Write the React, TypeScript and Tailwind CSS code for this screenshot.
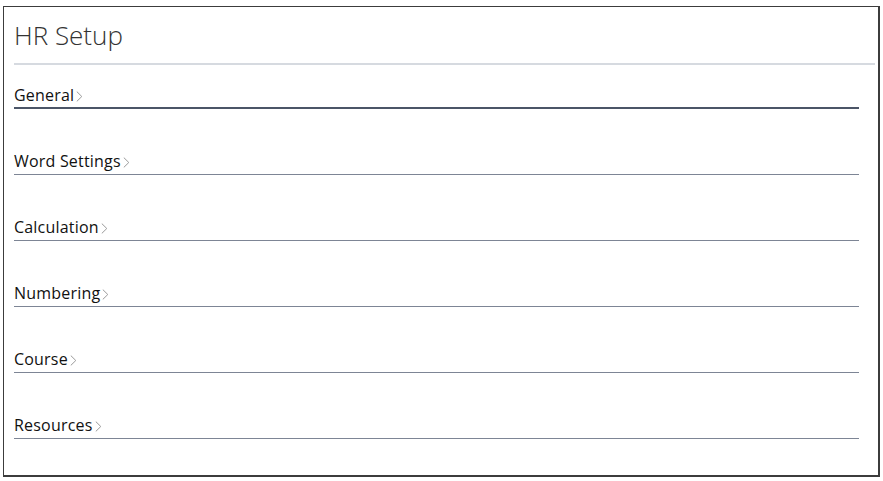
const sections = [
  "General",
  "Word Settings",
  "Calculation",
  "Numbering",
  "Course",
  "Resources",
];

const Chevron = () => (
  <svg width="7" height="11" viewBox="0 0 7 11" className="ml-[2px] mt-[2px]" fill="none">
    <path d="M0.8 0.6 L5.8 5.5 L0.8 10.4" stroke="#9a9a9a" strokeWidth="1" />
  </svg>
);

export default function App() {
  return (
    <div className="w-[883px] h-[481px] bg-white pt-[6px] pl-[3px] font-['Open_Sans',sans-serif]">
      <div className="w-[877px] h-[471px] border border-[#3c3c3c] border-r-2 border-b-2 bg-white">
        <div className="pl-[10px] pr-[3px]">
          <div className="h-[58px] flex items-center border-b-2 border-[#d6dae0]">
            <h1 className="text-[26px] font-light text-[#333] leading-none">HR Setup</h1>
          </div>
        </div>
        <div className="pl-[10px] pr-[19px] flex flex-col">
          {sections.map((s, i) => (
            <div
              key={s}
              className={
                i === 0
                  ? "mt-[20px] pb-[2px] border-b-2 border-[#4b5567]"
                  : "mt-[42px] pb-[3px] border-b border-[#7d8595]"
              }
            >
              <div className="flex items-center h-[20px] text-[16px] tracking-[0.2px] text-[#111] leading-[20px]">
                <span>{s}</span>
                <Chevron />
              </div>
            </div>
          ))}
        </div>
      </div>
    </div>
  );
}
